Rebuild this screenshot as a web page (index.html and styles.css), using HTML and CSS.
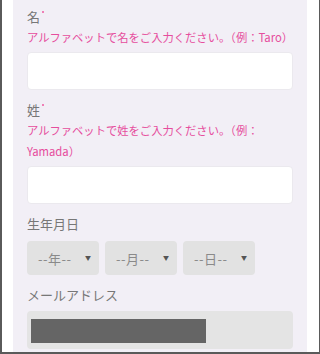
FILE: index.html
```html
<!DOCTYPE html>
<html lang="ja">
<head>
    <meta charset="UTF-8">
    <meta name="viewport" content="width=device-width, initial-scale=1.0">
    <title>会員登録</title>
    <link rel="stylesheet" href="styles.css">
</head>
<body>
    <div class="frame">
        <div class="panel">
            <div class="field first">
                <div class="label">名<span class="req"></span></div>
                <div class="help">アルファベットで名をご入力ください。（例：Taro）</div>
                <input class="text-input" type="text">
            </div>

            <div class="field">
                <div class="label">姓<span class="req"></span></div>
                <div class="help">アルファベットで姓をご入力ください。（例：Yamada）</div>
                <input class="text-input" type="text">
            </div>

            <div class="field">
                <div class="label">生年月日</div>
                <div class="birth">
                    <div class="select-wrap">
                        <select><option>--年--</option></select>
                    </div>
                    <div class="select-wrap">
                        <select><option>--月--</option></select>
                    </div>
                    <div class="select-wrap">
                        <select><option>--日--</option></select>
                    </div>
                </div>
            </div>

            <div class="field">
                <div class="label">メールアドレス</div>
                <div class="email-box">
                    <div class="redact"></div>
                </div>
            </div>
        </div>
    </div>
</body>
</html>
```

FILE: styles.css
```css
body {
    margin: 0;
    background: #fff;
    font-family: "Noto Sans CJK JP", "Noto Sans", sans-serif;
}

.frame {
    box-sizing: border-box;
    width: 320px;
    height: 354px;
    border-left: 2px solid #5a5a5a;
    border-right: 1px solid #5a5a5a;
    border-bottom: 2px solid #5a5a5a;
    overflow: hidden;
}

.panel {
    margin-left: 11px;
    width: 294px;
    height: 100%;
    box-sizing: border-box;
    padding: 7px 14px 0;
    background: #f2eff6;
}

.field {
    margin-top: 10px;
}

.field.first {
    margin-top: 0;
}

.label {
    font-size: 13px;
    line-height: 20px;
    color: #777;
}

.req {
    display: inline-block;
    width: 2px;
    height: 2px;
    margin-left: 2px;
    background: #ef80b6;
    vertical-align: 9px;
}

.help {
    font-size: 11.3px;
    line-height: 21px;
    color: #e64d9d;
}

.text-input {
    display: block;
    box-sizing: border-box;
    width: 100%;
    height: 38px;
    margin: 4px 0 0;
    border: 1px solid #ebe9ee;
    border-radius: 4px;
    background: #fff;
    outline: none;
}

.birth {
    display: flex;
    gap: 6px;
    margin-top: 7px;
}

.select-wrap {
    position: relative;
    width: 72px;
}

.select-wrap::after {
    content: "▼";
    position: absolute;
    right: 8px;
    top: 12px;
    font-size: 6px;
    color: #555;
    pointer-events: none;
}

.select-wrap select {
    appearance: none;
    -webkit-appearance: none;
    width: 100%;
    height: 34px;
    padding: 0 0 0 11px;
    border: none;
    border-radius: 4px;
    background: #e2e2e2;
    font-family: inherit;
    font-size: 13px;
    letter-spacing: 0.5px;
    color: #8a8a8a;
}

.email-box {
    box-sizing: border-box;
    height: 38px;
    margin-top: 6px;
    padding: 8px 4px;
    border-radius: 4px;
    background: #e4e4e4;
}

.redact {
    width: 175px;
    height: 24px;
    background: #656565;
}
```
